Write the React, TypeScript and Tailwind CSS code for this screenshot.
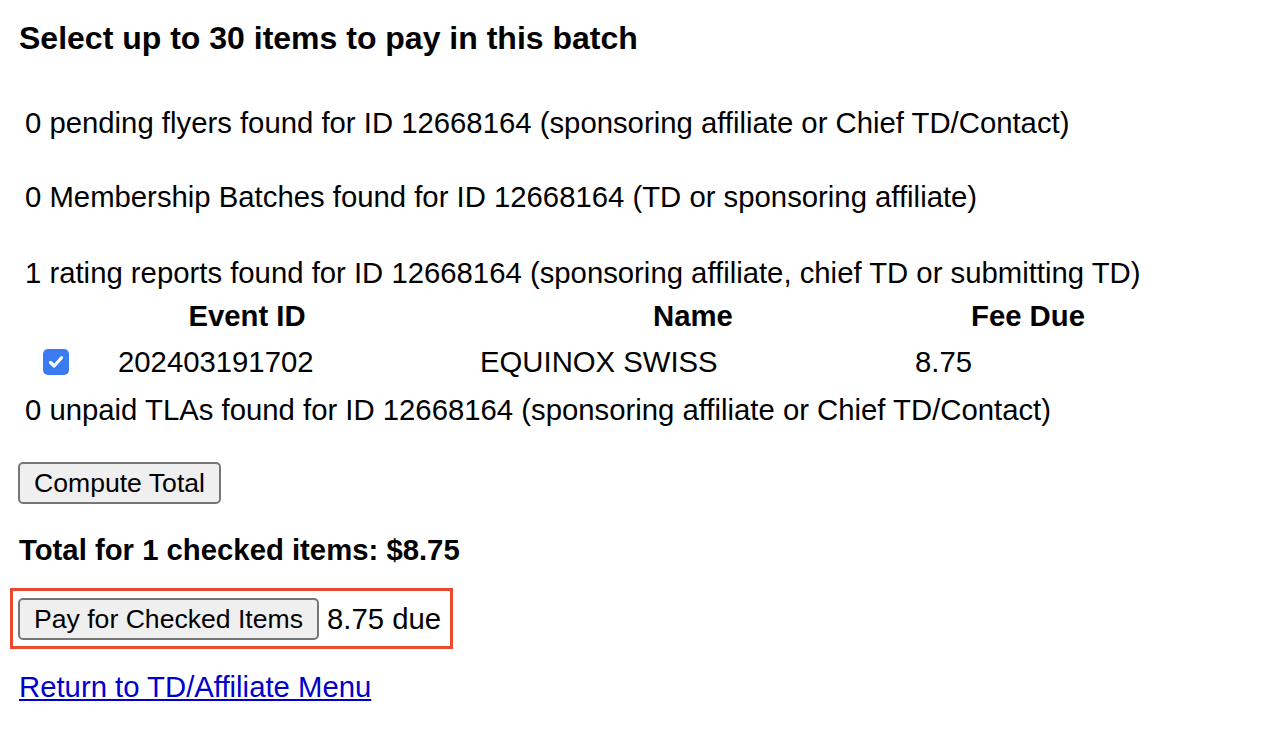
import React from 'react';

const font = { fontFamily: '"Liberation Sans", Arial, sans-serif' };

const CheckBox: React.FC = () => (
  <span className="inline-flex h-[26px] w-[26px] items-center justify-center rounded-[5px] bg-[#3a7bf2]">
    <svg width="18" height="18" viewBox="0 0 18 18" fill="none">
      <path d="M3.5 9.5 L7.2 13 L14.5 4.8" stroke="white" strokeWidth="3.2" strokeLinecap="round" strokeLinejoin="round" />
    </svg>
  </span>
);

const App: React.FC = () => {
  return (
    <div className="min-h-screen w-[1270px] bg-white text-black text-[29.3px] leading-[34px]" style={font}>
      <div className="pl-[19px] pt-[19px]">
        <h1 className="text-[32px] font-bold leading-[38px]">Select up to 30 items to pay in this batch</h1>

        <div className="mt-[49px] pl-[6px]">
          <p>0 pending flyers found for ID 12668164 (sponsoring affiliate or Chief TD/Contact)</p>
          <p className="mt-[40px]">0 Membership Batches found for ID 12668164 (TD or sponsoring affiliate)</p>
          <p className="mt-[42px]">1 rating reports found for ID 12668164 (sponsoring affiliate, chief TD or submitting TD)</p>

          <div className="mt-[9px] flex font-bold">
            <div className="w-[93px]" />
            <div className="w-[258px] text-center">Event ID</div>
            <div className="ml-[104px] w-[426px] text-center">Name</div>
            <div className="ml-[9px] w-[226px] text-center">Fee Due</div>
          </div>
          <div className="mt-[12px] flex items-center">
            <div className="flex w-[93px] items-center pl-[18px]">
              <CheckBox />
            </div>
            <div className="w-[258px]">202403191702</div>
            <div className="ml-[104px] w-[426px]">EQUINOX SWISS</div>
            <div className="ml-[9px] w-[226px]">8.75</div>
          </div>
          <p className="mt-[14px]">0 unpaid TLAs found for ID 12668164 (sponsoring affiliate or Chief TD/Contact)</p>
        </div>

        <button className="-ml-px mt-[35px] h-[42px] rounded-[5px] border-2 border-[#767676] bg-[#efefef] px-[14px] text-[26.6px] leading-[34px]">
          Compute Total
        </button>

        <p className="mt-[29px] font-bold">Total for 1 checked items: $8.75</p>

        <div className="-ml-[9px] mt-[21px] inline-flex items-center border-[3px] border-[#ea4a30] pb-[6px] pl-[5px] pr-[9px] pt-[7px]">
          <button className="h-[42px] rounded-[5px] border-2 border-[#767676] bg-[#efefef] px-[14px] text-[26.6px] leading-[34px]">
            Pay for Checked Items
          </button>
          <span className="ml-[8px]">8.75 due</span>
        </div>

        <div className="mt-[21px]">
          <a href="#" className="text-[#0000cc] underline">Return to TD/Affiliate Menu</a>
        </div>
      </div>
    </div>
  );
};

export default App;
